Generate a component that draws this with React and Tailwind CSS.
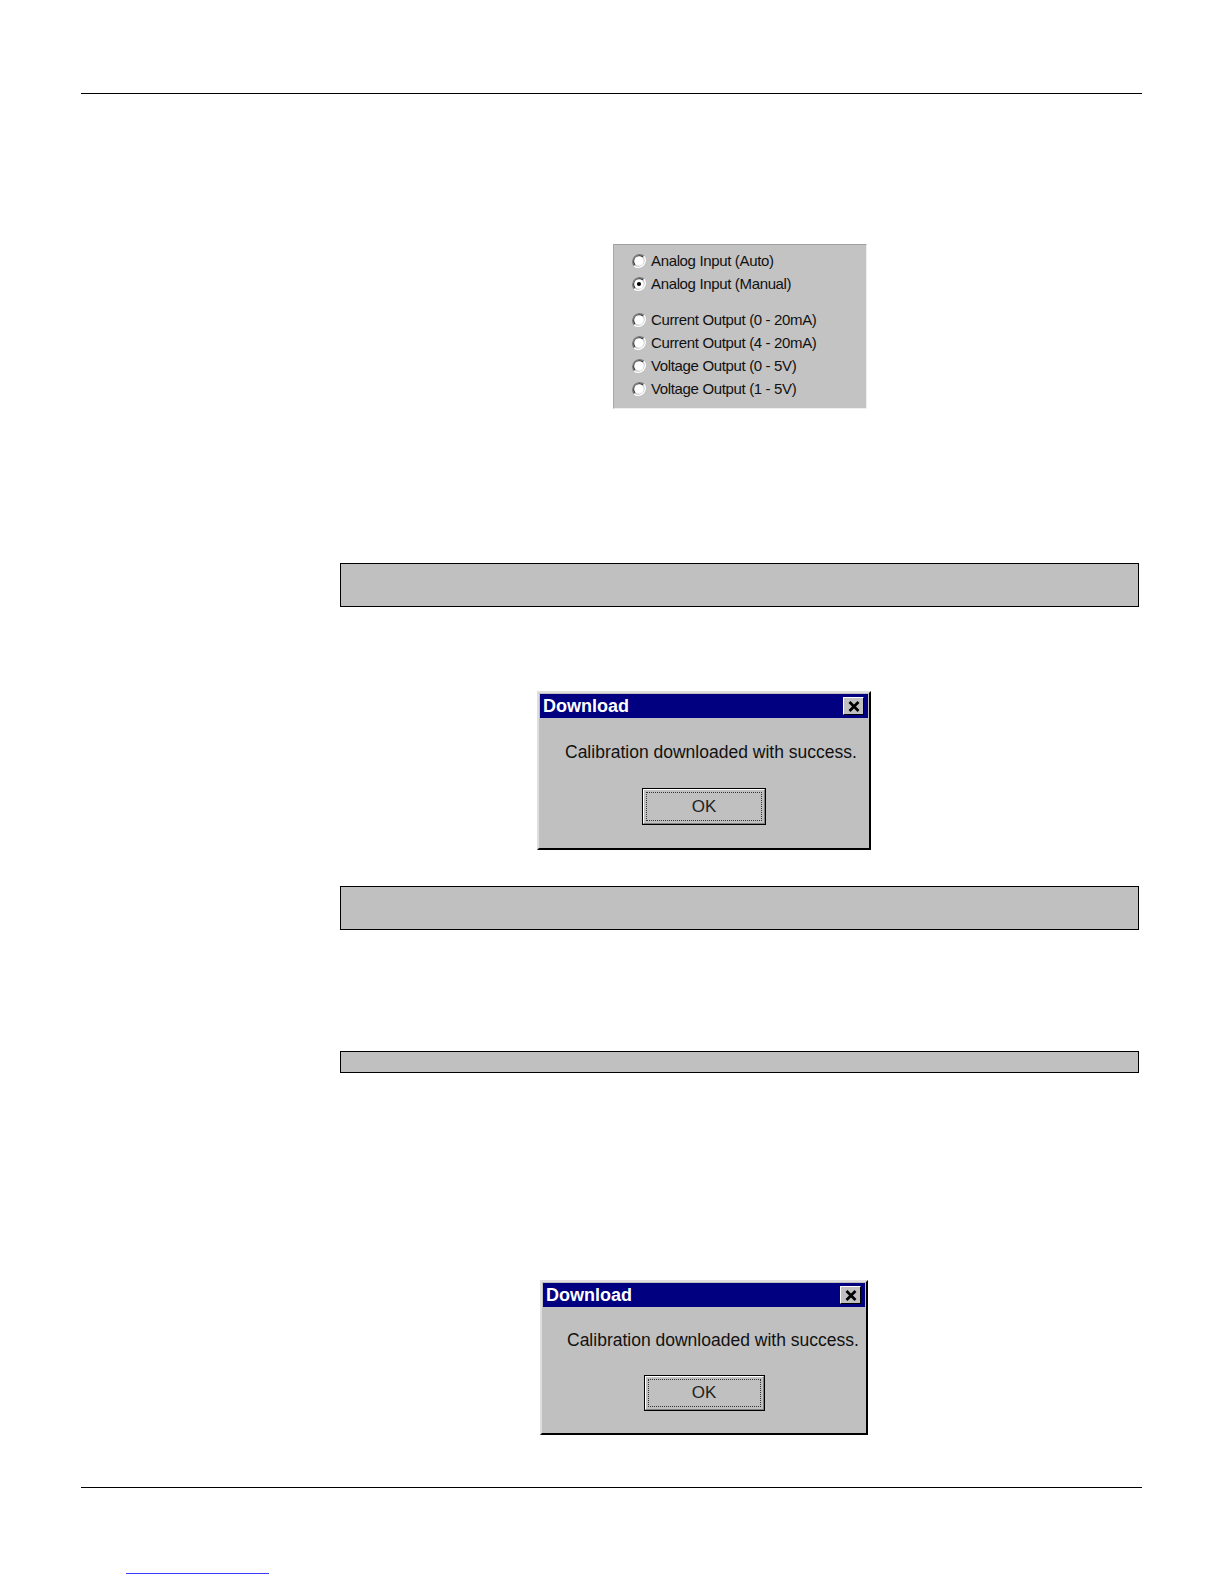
import React from "react";

const radios = [
  { label: "Analog Input (Auto)", checked: false },
  { label: "Analog Input (Manual)", checked: true },
  { label: "Current Output (0 - 20mA)", checked: false, gap: true },
  { label: "Current Output (4 - 20mA)", checked: false },
  { label: "Voltage Output (0 - 5V)", checked: false },
  { label: "Voltage Output (1 - 5V)", checked: false },
];

function Radio({ checked }) {
  return (
    <svg width="14" height="14" viewBox="0 0 12 12" className="shrink-0">
      <path d="M10.2 1.8 A6 6 0 0 0 1.8 10.2" fill="none" stroke="#7a7a7a" strokeWidth="1.1" />
      <path d="M9.4 2.6 A4.9 4.9 0 0 0 2.6 9.4" fill="none" stroke="#303030" strokeWidth="1.1" />
      <path d="M1.8 10.2 A6 6 0 0 0 10.2 1.8" fill="none" stroke="#ffffff" strokeWidth="1.1" />
      <circle cx="6" cy="6" r="4.1" fill="#ffffff" />
      {checked && <circle cx="6" cy="6" r="1.8" fill="#000000" />}
    </svg>
  );
}

function CloseBox() {
  return (
    <div className="flex h-[18px] w-[21px] items-center justify-center border-t border-l border-t-white border-l-white border-r border-b border-r-black border-b-black bg-[#c0c0c0]">
      <svg width="12" height="11" viewBox="0 0 12 11">
        <path d="M1.5 1 L10.5 10 M10.5 1 L1.5 10" stroke="#000" strokeWidth="2.7" />
      </svg>
    </div>
  );
}

function Dialog({ width, height, msgLeft, btnWidth, btnHeight, msgGap, btnGap }) {
  return (
    <div
      className="flex flex-col border-t-2 border-l-2 border-t-[#dfdfdf] border-l-[#dfdfdf] border-r-2 border-b-2 border-r-black border-b-black bg-[#c0c0c0] p-px"
      style={{ width, height }}
    >
      <div className="flex h-[24px] items-center justify-between bg-[#000080] pl-[3px] pr-[4px]">
        <span className="text-[18px] font-bold text-white leading-none">Download</span>
        <CloseBox />
      </div>
      <div className="text-[17.5px] leading-[20px] text-[#111]" style={{ paddingLeft: msgLeft, marginTop: msgGap }}>
        Calibration downloaded with success.
      </div>
      <div className="flex justify-center" style={{ marginTop: btnGap }}>
        <div
          className="border border-black bg-[#c0c0c0]"
          style={{ width: btnWidth, height: btnHeight }}
        >
          <div className="h-full w-full border-t border-l border-t-white border-l-white border-r border-b border-r-[#808080] border-b-[#808080] p-[2px]">
            <div className="flex h-full w-full items-center justify-center border border-dotted border-[#333] text-[17px] text-[#222]">
              OK
            </div>
          </div>
        </div>
      </div>
    </div>
  );
}

function GrayBox({ height }) {
  return (
    <div
      className="ml-[340px] w-[799px] border border-black bg-[#c0c0c0]"
      style={{ height }}
    />
  );
}

export default function App() {
  return (
    <div className="flex h-[1584px] w-full flex-col overflow-hidden bg-white font-['Liberation_Sans',Arial,sans-serif]">
      <div className="ml-[81px] mt-[93px] h-px w-[1061px] bg-black" />

      <div className="ml-[613px] mt-[150px] flex h-[165px] w-[254px] flex-col border-t border-l border-t-[#a0a0a0] border-l-[#a8a8a8] border-r border-b border-r-[#efefef] border-b-[#efefef] bg-[#c3c3c3] pl-[18px] pt-[5px]">
        {radios.map((r) => (
          <div
            key={r.label}
            className={`flex h-[22.9px] items-center gap-[5px] ${r.gap ? "mt-[13px]" : ""}`}
          >
            <Radio checked={r.checked} />
            <span className="text-[15px] tracking-[-0.35px] text-[#111]">{r.label}</span>
          </div>
        ))}
      </div>

      <div className="mt-[154px]">
        <GrayBox height={44} />
      </div>

      <div className="ml-[537px] mt-[84px]">
        <Dialog width={334} height={159} msgLeft={25} btnWidth={124} btnHeight={37} msgGap={24} btnGap={26} />
      </div>

      <div className="mt-[36px]">
        <GrayBox height={44} />
      </div>

      <div className="mt-[121px]">
        <GrayBox height={22} />
      </div>

      <div className="ml-[540px] mt-[207px]">
        <Dialog width={328} height={155} msgLeft={24} btnWidth={121} btnHeight={36} msgGap={23} btnGap={25} />
      </div>

      <div className="ml-[81px] mt-[52px] h-px w-[1061px] bg-black" />

      <div className="ml-[126px] mt-[85px] h-px w-[143px] bg-[#3a3aff]" />
    </div>
  );
}
